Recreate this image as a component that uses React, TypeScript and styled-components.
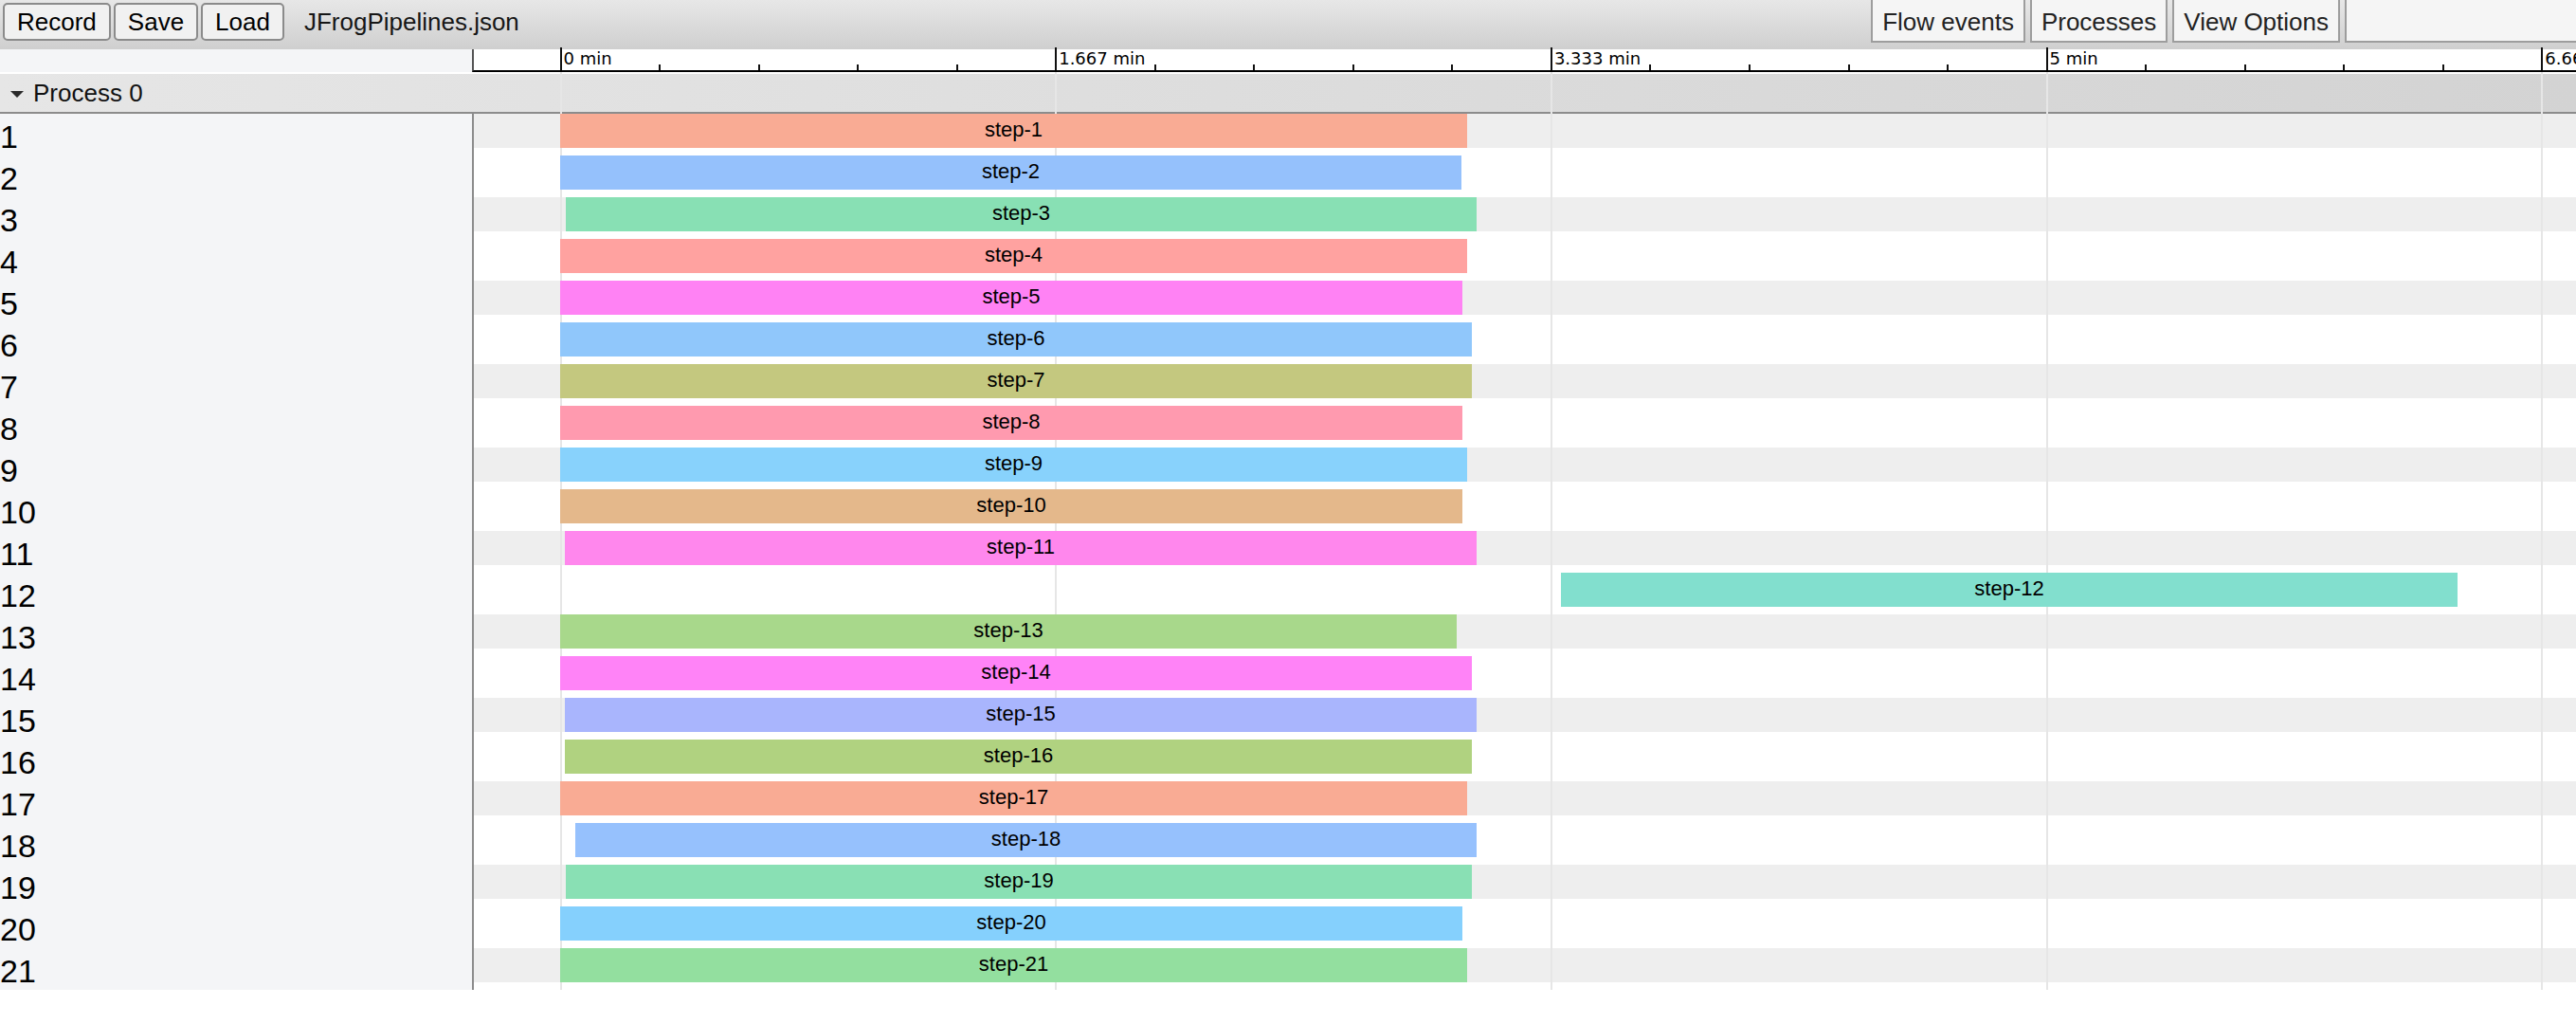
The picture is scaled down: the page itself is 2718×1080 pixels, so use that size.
import React from "react";
import styled, { createGlobalStyle } from "styled-components";

const GlobalStyle = createGlobalStyle`
  html, body {
    margin: 0;
    padding: 0;
    background: #fff;
  }
  body {
    font-family: "Liberation Sans", Arial, sans-serif;
    color: #000;
    overflow: hidden;
  }
`;

// x of "0 min" on the page, and px per major ruler step (1.667 min)
const ORIGIN = 591.5;
const MAJOR = 522.7;
const LABEL_COL = 500;

const majorLabels = ["0 min", "1.667 min", "3.333 min", "5 min", "6.667 min"];

const steps = [
  { start: 591, end: 1548, color: "#f9ab94" },
  { start: 591, end: 1542, color: "#95c1fc" },
  { start: 597, end: 1558, color: "#88e0b4" },
  { start: 591, end: 1548, color: "#ffa2a0" },
  { start: 591, end: 1543, color: "#ff82f4" },
  { start: 591, end: 1553, color: "#90c7fb" },
  { start: 591, end: 1553, color: "#c4c87f" },
  { start: 591, end: 1543, color: "#ff9aaf" },
  { start: 591, end: 1548, color: "#88d2fc" },
  { start: 591, end: 1543, color: "#e4b88b" },
  { start: 596, end: 1558, color: "#ff87ed" },
  { start: 1647, end: 2593, color: "#82dfce" },
  { start: 591, end: 1537, color: "#a8d88b" },
  { start: 591, end: 1553, color: "#ff83f7" },
  { start: 596, end: 1558, color: "#a9b5fd" },
  { start: 596, end: 1553, color: "#b0d280" },
  { start: 591, end: 1548, color: "#f9ab94" },
  { start: 607, end: 1558, color: "#96c1fd" },
  { start: 597, end: 1553, color: "#89e0b4" },
  { start: 591, end: 1543, color: "#85d0fd" },
  { start: 591, end: 1548, color: "#93df9f" },
];

const Page = styled.div`
  width: 2718px;
  height: 1080px;
  background: #fff;
  overflow: hidden;
`;

const Toolbar = styled.div`
  height: 52px;
  display: flex;
  align-items: flex-start;
  padding-left: 3px;
  box-sizing: border-box;
  background: linear-gradient(#e7e7e7, #cfcfcf);
  overflow: hidden;
`;

const LeftGroup = styled.div`
  display: flex;
  gap: 3px;
  margin-top: 3px;
  flex-shrink: 0;
`;

const ToolButton = styled.div`
  height: 40px;
  box-sizing: border-box;
  padding: 0 13px;
  border: 2px solid #8b8b8b;
  border-radius: 5px;
  background: #f1f1f1;
  font-size: 26px;
  line-height: 36px;
  color: #000;
  white-space: nowrap;
`;

const FileName = styled.div`
  margin-left: 21px;
  margin-top: 3px;
  font-size: 26px;
  line-height: 40px;
  color: #161616;
  white-space: nowrap;
  flex-shrink: 0;
`;

const RightGroup = styled.div`
  display: flex;
  gap: 5px;
  margin-left: auto;
  margin-top: -2px;
  margin-right: -4px;
  flex-shrink: 0;
`;

const OptionButton = styled.div<{ $width?: number }>`
  height: 47px;
  box-sizing: border-box;
  ${(p) => (p.$width ? `width: ${p.$width}px;` : "")}
  padding: 5px 10px 0;
  border: 2px solid #9d9d9d;
  background: #f5f5f5;
  font-size: 26px;
  line-height: 36px;
  color: #222;
  white-space: nowrap;
`;

const RulerRow = styled.div`
  display: flex;
  height: 24px;
`;

const RulerSpacer = styled.div`
  width: 498px;
  flex-shrink: 0;
  background: #f4f5f7;
`;

const Ruler = styled.div`
  position: relative;
  flex: 1;
  background: #fff;
  border-left: 2px solid #555;
  border-bottom: 2px solid #000;
  overflow-x: clip;
`;

const Tick = styled.div<{ $major?: boolean }>`
  position: absolute;
  bottom: 0;
  width: 2px;
  height: ${(p) => (p.$major ? "24px" : "6px")};
  background: #111;
`;

const TickLabel = styled.div`
  position: absolute;
  top: 0;
  font-family: "DejaVu Sans", Verdana, sans-serif;
  font-size: 18px;
  line-height: 20px;
  color: #000;
  white-space: nowrap;
`;

const Body = styled.div`
  position: relative;
  padding-top: 2px;
  background: #fff;
`;

const GridLayer = styled.div`
  position: absolute;
  inset: 0;
  pointer-events: none;
  z-index: 1;
`;

const GridLine = styled.div`
  position: absolute;
  top: 0;
  bottom: 0;
  width: 2px;
  background: #e6e6e6;
`;

const ProcessHeader = styled.div`
  height: 42px;
  box-sizing: border-box;
  display: flex;
  align-items: center;
  gap: 10px;
  padding-left: 11px;
  background: linear-gradient(to right, #e6e6e6, #d3d3d3);
  border-bottom: 2px solid #8c8c8c;
  font-size: 26px;
  line-height: 40px;
  color: #111;
`;

const Caret = styled.span`
  width: 0;
  height: 0;
  margin-top: 2px;
  border-left: 7px solid transparent;
  border-right: 7px solid transparent;
  border-top: 7px solid #2a2a2a;
`;

const Tracks = styled.div`
  display: flex;
`;

const LabelColumn = styled.div`
  width: ${LABEL_COL}px;
  flex-shrink: 0;
  box-sizing: border-box;
  background: #f4f5f7;
  border-right: 2px solid #8c8c8c;
`;

const RowLabel = styled.div`
  height: 44px;
  font-size: 34px;
  line-height: 48px;
  color: #000;
`;

const TrackColumn = styled.div`
  flex: 1;
`;

const TrackRow = styled.div<{ $striped: boolean }>`
  position: relative;
  height: 44px;
  background: ${(p) =>
    p.$striped
      ? "linear-gradient(#eeeeee, #eeeeee) top left / 100% 36px no-repeat"
      : "transparent"};
`;

const Slice = styled.div<{ $color: string }>`
  position: absolute;
  top: 0;
  height: 36px;
  z-index: 2;
  background: ${(p) => p.$color};
  font-size: 22px;
  line-height: 34px;
  text-align: center;
  color: #000;
  white-space: nowrap;
  overflow: hidden;
`;

const App: React.FC = () => {
  const minorStep = MAJOR / 5;
  const rulerLeft = 500;
  const ticks: { x: number; major: boolean }[] = [];
  for (let i = 0; i < 25; i++) {
    const x = ORIGIN + i * minorStep;
    if (x > 2718) break;
    ticks.push({ x: x - rulerLeft, major: i % 5 === 0 });
  }

  return (
    <Page>
      <GlobalStyle />
      <Toolbar>
        <LeftGroup>
          <ToolButton>Record</ToolButton>
          <ToolButton>Save</ToolButton>
          <ToolButton>Load</ToolButton>
        </LeftGroup>
        <FileName>JFrogPipelines.json</FileName>
        <RightGroup>
          <OptionButton>Flow events</OptionButton>
          <OptionButton>Processes</OptionButton>
          <OptionButton>View Options</OptionButton>
          <OptionButton $width={248} />
        </RightGroup>
      </Toolbar>

      <RulerRow>
        <RulerSpacer />
        <Ruler>
          {ticks.map((t, i) => (
            <Tick key={i} $major={t.major} style={{ left: t.x - 1 }} />
          ))}
          {majorLabels.map((label, i) => (
            <TickLabel key={label} style={{ left: ORIGIN - rulerLeft + i * MAJOR + 3 }}>
              {label}
            </TickLabel>
          ))}
        </Ruler>
      </RulerRow>

      <Body>
        <GridLayer>
          {majorLabels.map((label, i) => (
            <GridLine key={label} style={{ left: ORIGIN + i * MAJOR - 1 }} />
          ))}
        </GridLayer>

        <ProcessHeader>
          <Caret />
          Process 0
        </ProcessHeader>

        <Tracks>
          <LabelColumn>
            {steps.map((_, i) => (
              <RowLabel key={i}>{i + 1}</RowLabel>
            ))}
          </LabelColumn>
          <TrackColumn>
            {steps.map((s, i) => (
              <TrackRow key={i} $striped={i % 2 === 0}>
                <Slice
                  $color={s.color}
                  style={{ left: s.start - LABEL_COL, width: s.end - s.start }}
                >
                  step-{i + 1}
                </Slice>
              </TrackRow>
            ))}
          </TrackColumn>
        </Tracks>
      </Body>
    </Page>
  );
};

export default App;
